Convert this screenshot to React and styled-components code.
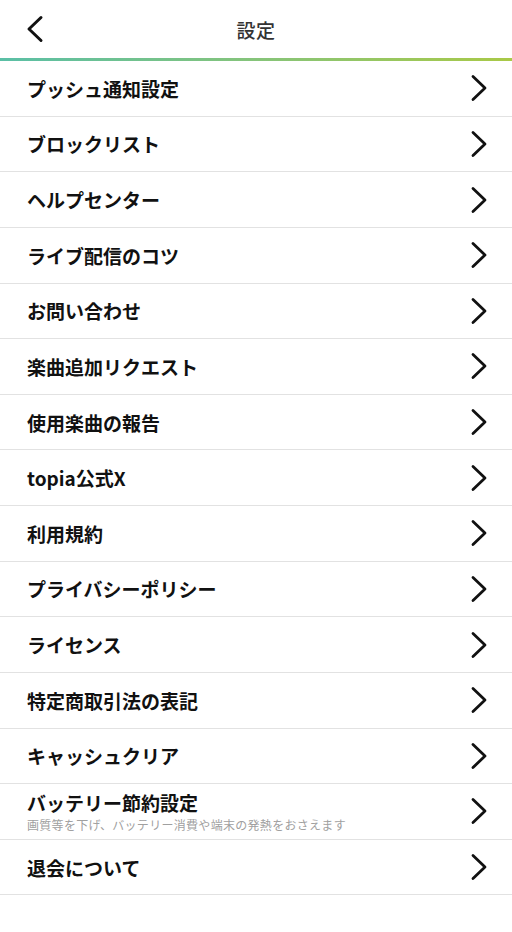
import React from "react";
import styled, { createGlobalStyle } from "styled-components";

const GlobalStyle = createGlobalStyle`
  html, body {
    margin: 0;
    padding: 0;
    background: #ffffff;
  }
  body {
    font-family: "Noto Sans CJK JP", "Noto Sans", sans-serif;
    color: #111111;
  }
`;

const Page = styled.div`
  width: 512px;
  min-height: 932px;
  background: #ffffff;
`;

const Header = styled.header`
  position: relative;
  height: 58px;
  display: flex;
  align-items: center;
  justify-content: center;
`;

const BackButton = styled.button`
  position: absolute;
  left: 22px;
  top: 14px;
  width: 26px;
  height: 30px;
  padding: 0;
  border: none;
  background: none;
  display: flex;
  align-items: center;
  justify-content: center;
`;

const Title = styled.h1`
  margin: 0;
  font-size: 19px;
  font-weight: 500;
  color: #333333;
  letter-spacing: 0.5px;
`;

const GradientLine = styled.div`
  height: 3px;
  background: linear-gradient(90deg, #5abfa6 0%, #86c47a 50%, #a9c947 100%);
`;

const List = styled.ul`
  list-style: none;
  margin: 0;
  padding: 0;
`;

const Row = styled.li`
  box-sizing: border-box;
  height: 55.64px;
  border-bottom: 1px solid #e2e2e2;
  display: flex;
  align-items: center;
  justify-content: space-between;
  padding: 0 24px 0 27px;
`;

const Texts = styled.div`
  display: flex;
  flex-direction: column;
  justify-content: center;
`;

const Label = styled.span`
  font-size: 19px;
  font-weight: 700;
  color: #111111;
  line-height: normal;
`;

const Sub = styled.span`
  font-size: 12px;
  letter-spacing: 0.3px;
  color: #a0a0a0;
  line-height: normal;
`;

const Chevron = ({ dir = "right" }) =>
  dir === "right" ? (
    <svg width="18" height="28" viewBox="0 0 18 28" fill="none">
      <path
        d="M3 2.5 L15 14 L3 25.5"
        stroke="#111"
        strokeWidth="2.8"
        strokeLinecap="round"
        strokeLinejoin="round"
      />
    </svg>
  ) : (
    <svg width="20" height="28" viewBox="0 0 20 28" fill="none">
      <path
        d="M16 2.5 L4 14 L16 25.5"
        stroke="#111"
        strokeWidth="3"
        strokeLinecap="round"
        strokeLinejoin="round"
      />
    </svg>
  );

const items = [
  { label: "プッシュ通知設定" },
  { label: "ブロックリスト" },
  { label: "ヘルプセンター" },
  { label: "ライブ配信のコツ" },
  { label: "お問い合わせ" },
  { label: "楽曲追加リクエスト" },
  { label: "使用楽曲の報告" },
  { label: "topia公式X" },
  { label: "利用規約" },
  { label: "プライバシーポリシー" },
  { label: "ライセンス" },
  { label: "特定商取引法の表記" },
  { label: "キャッシュクリア" },
  {
    label: "バッテリー節約設定",
    sub: "画質等を下げ、バッテリー消費や端末の発熱をおさえます",
  },
  { label: "退会について" },
];

export default function App() {
  return (
    <Page>
      <GlobalStyle />
      <Header>
        <BackButton aria-label="戻る">
          <Chevron dir="left" />
        </BackButton>
        <Title>設定</Title>
      </Header>
      <GradientLine />
      <List>
        {items.map((item) => (
          <Row key={item.label}>
            <Texts>
              <Label>{item.label}</Label>
              {item.sub && <Sub>{item.sub}</Sub>}
            </Texts>
            <Chevron />
          </Row>
        ))}
      </List>
    </Page>
  );
}
